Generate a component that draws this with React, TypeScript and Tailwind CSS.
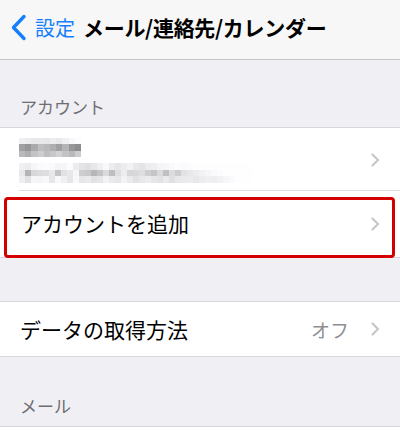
import React from "react";

const line1: number[][] = [
  [240, 236, 232, 232, 230, 236, 232, 240, 248, 252],
  [160, 150, 170, 190, 185, 175, 160, 180, 150, 140],
  [185, 175, 195, 205, 190, 200, 210, 195, 185, 205],
];
const line2: number[][] = [
  [240, 236, 246, 250, 252, 250, 244, 246, 252, 236, 228, 224, 232, 240, 248, 236, 230, 236, 242, 232, 228, 236, 238, 244, 246, 250, 252, 250, 252, 254, 254, 254, 254, 254, 254, 254, 254, 254, 254],
  [232, 180, 215, 220, 222, 232, 196, 226, 232, 246, 205, 200, 182, 196, 218, 190, 222, 236, 214, 216, 222, 206, 198, 218, 192, 220, 206, 226, 232, 236, 242, 246, 250, 252, 254, 254, 254, 254, 254],
  [238, 226, 246, 244, 248, 230, 248, 240, 230, 248, 230, 234, 226, 230, 242, 234, 230, 242, 234, 226, 232, 236, 230, 226, 234, 224, 232, 234, 236, 232, 236, 240, 238, 242, 246, 250, 254, 254, 254],
];

function Pix({ rows, w }: { rows: number[][]; w: number }) {
  return (
    <div className="flex flex-col">
      {rows.map((r, i) => (
        <div key={i} className="flex">
          {r.map((v, j) => (
            <div
              key={j}
              style={{ width: w, height: 6.5, backgroundColor: `rgb(${v},${v},${Math.min(255, v + 3)})` }}
            />
          ))}
        </div>
      ))}
    </div>
  );
}

function Chevron() {
  return (
    <svg width="9" height="14" viewBox="0 0 9 14" className="shrink-0">
      <path d="M1.5 1.5 L7 7 L1.5 12.5" fill="none" stroke="#c7c7cc" strokeWidth="2.2" strokeLinecap="round" strokeLinejoin="round" />
    </svg>
  );
}

export default function App() {
  return (
    <div
      className="w-[400px] h-[434px] overflow-hidden bg-[#efeff4] text-black"
      style={{ fontFamily: '"Noto Sans CJK JP", "Noto Sans", sans-serif' }}
    >
      {/* Nav bar */}
      <div className="h-[60px] bg-[#f7f7f7] border-b border-[#c4c4c8] flex items-center">
        <div className="flex items-center pl-[10px] pb-[4px]">
          <svg width="17" height="27" viewBox="0 0 17 27">
            <path d="M14 2.5 L3.5 13.5 L14 24.5" fill="none" stroke="#157efb" strokeWidth="3.4" strokeLinecap="round" strokeLinejoin="round" />
          </svg>
          <span className="ml-[8px] text-[20px] leading-none text-[#157efb]">設定</span>
          <span className="ml-[8px] text-[21px] leading-none font-bold tracking-[-0.3px]">メール/連絡先/カレンダー</span>
        </div>
      </div>

      {/* Section header */}
      <div className="h-[67px] flex items-end pl-[20px] pb-[12px]">
        <span className="text-[17px] leading-none text-[#6d6d72]">アカウント</span>
      </div>

      {/* Accounts group */}
      <div className="bg-white border-t border-b border-[#d8d8dc]">
        <div className="h-[63px] flex items-center pl-[19px] pr-[20px] relative">
          <div className="flex-1 flex flex-col gap-[6px] pt-[1px]">
            <Pix rows={line1} w={6.2} />
            <Pix rows={line2} w={6} />
          </div>
          <Chevron />
          <div className="absolute left-[19px] right-0 bottom-0 h-px bg-[#dcdce0]" />
        </div>
        <div className="h-[66px] flex items-center pl-[21px] pr-[20px] relative">
          <span className="flex-1 text-[21px] leading-none pb-[1px]">アカウントを追加</span>
          <Chevron />
          <div className="absolute left-[4px] right-[5px] top-[6px] bottom-[-1px] border-[3px] border-[#d40000] rounded-[4px]" />
        </div>
      </div>

      <div className="h-[43px]" />

      {/* Fetch */}
      <div className="bg-white border-t border-b border-[#d8d8dc] h-[56px] flex items-center pl-[20px] pr-[20px]">
        <span className="flex-1 text-[21px] leading-none">データの取得方法</span>
        <span className="text-[19px] leading-none text-[#8e8e93] mr-[22px]">オフ</span>
        <Chevron />
      </div>

      <div className="h-[69px] flex items-end pl-[20px] pb-[12px]">
        <span className="text-[17px] leading-none text-[#6d6d72]">メール</span>
      </div>
      <div className="bg-white border-t border-[#d8d8dc] h-[20px]" />
    </div>
  );
}
